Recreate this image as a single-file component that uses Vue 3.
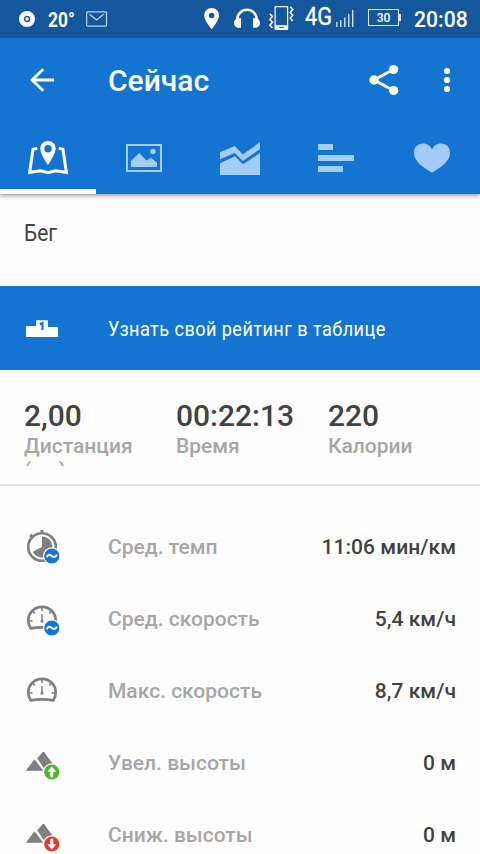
<script setup>
const totals = [
  { value: '2,00', label: 'Дистанция (км)' },
  { value: '00:22:13', label: 'Время' },
  { value: '220', label: 'Калории' },
]
const rows = [
  { icon: 'pace', badge: 'average', label: 'Сред. темп', value: '11:06 мин/км' },
  { icon: 'speed', badge: 'average', label: 'Сред. скорость', value: '5,4 км/ч' },
  { icon: 'speed', badge: '', label: 'Макс. скорость', value: '8,7 км/ч' },
  { icon: 'hill', badge: 'up', label: 'Увел. высоты', value: '0 м' },
  { icon: 'hill', badge: 'down', label: 'Сниж. высоты', value: '0 м' },
]
</script>

<template>
  <div class="screen">
    <header class="top">
      <div class="status">
        <svg class="disc" width="18" height="18" viewBox="0 0 18 18"><circle cx="9" cy="9" r="5.6" fill="none" stroke="#fff" stroke-width="4.800" /><circle cx="9" cy="9" r="1.700" fill="#fff" /></svg>
        <span class="temp"><span class="squeeze">20°</span></span>
        <svg class="mail" width="22" height="16" viewBox="0 0 22 16" fill="none" stroke="#b9d4ee" stroke-width="1.2"><rect x=".7" y=".8" width="19.8" height="14.4" rx="1" /><path d="M3.5 3.2 10.6 9l7.1-5.8" /></svg>
        <svg class="pin" width="16" height="22" viewBox="0 0 16 22"><path fill="#fff" fill-rule="evenodd" d="M7.7 0C3.4 0 .3 3.3.3 7.4.3 12.8 7.7 21 7.7 21s7.3-8.2 7.3-13.6C15 3.3 11.9 0 7.7 0Zm0 4.7a2.8 2.8 0 1 1 0 5.6 2.8 2.8 0 0 1 0-5.6Z" /></svg>
        <svg class="phones" width="26" height="20" viewBox="0 0 26 20"><path d="M3.3 13.5v-2a9.7 9.7 0 0 1 19.4 0v2" fill="none" stroke="#fff" stroke-width="2.6" /><path fill="#fff" d="M7 10.3v9.4H4.2C1.6 19.7 0 17.6 0 15c0-2.5 1.5-4.7 4.2-4.7ZM19 10.3v9.4h2.8c2.6 0 4.2-2.1 4.2-4.7 0-2.5-1.5-4.7-4.2-4.7Z" /></svg>
        <svg class="vibrate" width="26" height="25" viewBox="0 0 26 25"><path fill="#fff" fill-rule="evenodd" d="M6.9 0h10.900c1 0 1.400.5 1.400 1.300v21.400c0 .9-.4 1.300-1.400 1.300H6.900c-1 0-1.400-.4-1.400-1.300V1.300C5.500.5 5.900 0 6.900 0Zm-.2 1.300V19.300H18V1.300ZM10 21v1.100h4.700V21Z" /><path d="m21.200.8 2.500 2.800-2.500 2.800 2.500 2.900-2.500 2.800 2.500 2.900M.9 7.800l2.500 2.800L.9 13.500l2.500 2.800-2.500 2.900 2.500 2.800" fill="none" stroke="#fff" stroke-width="1.500" /></svg>
        <span class="network"><span class="squeeze">4G</span></span>
        <svg class="signal" width="18" height="18" viewBox="0 0 18 18"><path d="M.8 12v5M4.800 10v7M8.800 7.500v9.500M12.800 4v13M16.700 0v17" stroke="#dceafa" stroke-width="1.300" /></svg>
        <span class="battery"><span>30</span></span>
        <span class="clock">20:08</span>
      </div>
      <div class="bar">
        <svg class="back" width="24" height="24" viewBox="0 0 24 24" fill="none" stroke="#fff" stroke-width="2.800"><path d="M24 12H2M13.300 1.200 2 12l11.300 10.800" /></svg>
        <h1>Сейчас</h1>
        <svg class="share" width="30" height="32" viewBox="0 0 30 32"><path d="M24.500 5.500 5 16l19.500 10.500" fill="none" stroke="#fff" stroke-width="3" /><g fill="#fff"><circle cx="24.600" cy="5.500" r="4.600" /><circle cx="5" cy="16" r="4.700" /><circle cx="24.600" cy="26.500" r="4.600" /></g></svg>
        <svg class="more" width="8" height="26" viewBox="0 0 8 26" fill="#fff"><circle cx="4" cy="4" r="3.100" /><circle cx="4" cy="13" r="3.100" /><circle cx="4" cy="22" r="3.100" /></svg>
      </div>
      <nav class="tabs">
        <a class="tab active"><svg width="42" height="36" viewBox="0 0 42 36"><path d="m10.300 8.400-4.300.9L2.700 32.400l10.600-1.700 7.700 2 7.700-2 10.600 1.700L36 9.300l-4.300-.9" fill="none" stroke="#fff" stroke-width="3" /><path fill="#fff" fill-rule="evenodd" d="M21 1c-4.500 0-7.700 3.300-7.700 7.500C13.300 14 21 25 21 25s7.700-11 7.700-16.500C28.700 4.300 25.500 1 21 1Zm0 4a3.700 3.700 0 1 1 0 7.400A3.700 3.700 0 0 1 21 5Z" /></svg></a>
        <a class="tab"><svg width="36" height="28" viewBox="0 0 36 28" fill="#a3cdf7"><path fill-rule="evenodd" d="M0 0h36v28H0ZM2 2v24h32V2Z" /><path d="M5 23v-6l8.200-8 7.300 7.500L25 13.800l6 5V23Z" /><circle cx="27" cy="7.500" r="2.700" /></svg></a>
        <a class="tab"><svg width="40" height="36" viewBox="0 0 40 36" fill="#a3cdf7"><path d="M0 12.300 14.800 6l8 8.500L40 2.300V9L22.800 21l-8-8L0 19.300Z" /><path d="m0 23.300 15-7 8 8L40 13v22H0Z" /></svg></a>
        <a class="tab"><svg width="36" height="28" viewBox="0 0 36 28" fill="#a3cdf7"><path d="M0 0h15v6H0ZM0 11h36v6H0ZM0 22h25v6H0Z" /></svg></a>
        <a class="tab"><svg width="36" height="30" viewBox="0 0 36 30"><path fill="#a3cdf7" d="M18 29.700C13.500 26.500 0 20 0 9.700 0 4 4 .5 9 .5c4 0 7.600 2.500 9 6.200C19.400 3 23 .5 27 .5c5 0 9 3.500 9 9.200 0 10.300-13.500 16.800-18 20Z" /></svg></a>
      </nav>
    </header>

    <div class="activity"><span class="squeeze">Бег</span></div>

    <a class="ranking">
      <svg class="podium" width="32" height="18" viewBox="0 0 32 18"><path fill="#fff" d="M1 6h9V1.200q0-1 1-1h10q1 0 1 1V7h9q1 0 1 1v9H0V7q0-1 1-1Z" /><path d="m13.800 4.100 2.700-1v7" fill="none" stroke="#1474d2" stroke-width="2.200" /></svg>
      <span class="squeeze">Узнать свой рейтинг в таблице</span>
    </a>

    <section class="totals">
      <div v-for="t in totals" :key="t.label" class="total">
        <div class="amount">{{ t.value }}</div>
        <div class="caption">{{ t.label }}</div>
      </div>
    </section>

    <section class="details">
      <div v-for="r in rows" :key="r.label" class="row">
        <svg class="glyph" width="36" height="38" viewBox="0 0 36 38">
          <g v-if="r.icon === 'pace'">
            <circle cx="18" cy="19" r="13.800" fill="none" stroke="#808080" stroke-width="2.600" />
            <path d="M16.500 2h3v4h-3zM5 8l2.500-2.500L9.500 8 7.500 10z" fill="#808080" />
            <path d="M18 19V8.500a10.500 10.500 0 1 1-9.300 15.300Z" fill="#808080" />
          </g>
          <g v-else-if="r.icon === 'speed'" fill="none" stroke="#808080">
            <path d="M6.600 28.300C4.700 25.500 4.300 22.500 4.300 20.500a13.700 13.700 0 0 1 27.400 0c0 2-.4 5-2.300 7.800q-11.400-1.800-22.800 0Z" stroke-width="2.700" />
            <path d="M18 7v4M8.500 11l2.300 2.300M27.500 11l-2.300 2.300M5 21h3.500M31 21h-3.500" stroke-width="1.700" />
            <path d="M18 14v6.500" stroke-width="1.500" /><ellipse cx="18" cy="21" rx="1" ry="1.500" fill="#808080" stroke-width="1" />
          </g>
          <g v-else fill="#808080"><path d="m13.200 14.300 5.400-6.100q.8-.9 1.600 0L30 21.500 25 27h-3.300Z" /><path d="M1.700 26.800 9.500 16.400q1-1.100 2 0L19.300 26.800Z" /></g>
          <g v-if="r.badge">
            <circle cx="27.800" cy="28" r="8.700" fill="#fefefe" />
            <circle cx="27.800" cy="28" r="7.600" :class="r.badge" />
            <path v-if="r.badge === 'average'" d="M22.700 29.200c1.800-3.500 3.600-2.800 5.200-1.300 1.700 1.500 3.400 1.600 5-1.200" fill="none" stroke="#fff" stroke-width="2" />
            <path v-else-if="r.badge === 'up'" d="m27.800 22.500 4.500 5.300h-3v5.400h-3v-5.400h-3Z" fill="#fff" />
            <path v-else d="m27.800 33.500 4.500-5.300h-3v-5.400h-3v5.400h-3Z" fill="#fff" />
          </g>
        </svg>
        <span class="name">{{ r.label }}</span>
        <span class="value">{{ r.value }}</span>
      </div>
    </section>
  </div>
</template>

<style>
body { background: #fefefe; overflow: hidden; }
</style>

<style scoped>
.screen { width: 480px; height: 854px; overflow: hidden; background: #fefefe; font-family: Roboto, "Liberation Sans", sans-serif; color: #424242; }
svg { display: block; flex: none; }
.top { background: #1474d2; color: #fff; box-shadow: 0 1px 5px rgba(0, 0, 0, .5); }
.status { height: 38px; background: #15579c; display: flex; align-items: flex-start; white-space: nowrap; }
.squeeze { display: inline-block; transform-origin: left center; }
.disc { margin: 10px 0 0 18px; }
.temp { width: 38px; margin-left: 12px; font-size: 20px; font-weight: 700; line-height: 40px; }
.temp .squeeze { transform: scaleX(.87); }
.mail { margin-top: 11px; }
.pin { margin: 8px 0 0 96px; }
.phones { margin: 8px 0 0 14px; }
.vibrate { margin: 6px 0 0 9px; }
.network { width: 31px; margin-left: 10px; font-size: 26.5px; line-height: 31px; }
.network .squeeze { transform: scaleX(.82); -webkit-text-stroke: .3px #fff; }
.signal { margin: 10px 0 0 0; }
.battery { box-sizing: border-box; position: relative; width: 31px; height: 17px; margin: 9px 0 0 14px; border: 1.5px solid #dceafa; font-size: 12px; font-weight: 500; line-height: 16px; text-align: center; }
.battery::after { content: ""; position: absolute; right: -3px; top: 4px; width: 2px; height: 7px; background: #dceafa; }
.clock { margin-left: 15px; font-size: 21.2px; font-weight: 500; line-height: 40px; }
.bar { height: 84px; display: flex; align-items: center; }
.back { margin-left: 30px; }
h1 { margin: 2px 0 0 54px; width: 261px; font-size: 30px; font-weight: 500; line-height: 38px; }
.more { margin-left: 44px; }
.tabs { display: grid; grid-template-columns: repeat(5, 96px); height: 72px; }
.tab { display: flex; align-items: center; justify-content: center; box-sizing: border-box; }
.tab.active { border-bottom: 5px solid #fff; padding-top: 5px; }
.activity { height: 92px; box-sizing: border-box; padding: 24px 24px 0; font-size: 24px; line-height: 30px; }
.activity .squeeze { transform: scaleX(.87); }
.ranking { display: flex; align-items: center; height: 84px; padding-left: 26px; background: #1474d2; color: #fff; font-size: 21px; white-space: nowrap; }
.podium { margin-top: 2px; }
.ranking > .squeeze { margin: 2px 0 0 50px; letter-spacing: .5px; transform: scaleX(.863); }
.totals { height: 114px; box-sizing: content-box; border-bottom: 2px solid #dfdfdf; display: grid; grid-template-columns: 152px 152px 128px; padding-left: 24px; }
.total { height: 96px; box-sizing: border-box; padding-top: 29px; overflow: hidden; }
.amount { font-size: 30px; font-weight: 500; line-height: 34px; white-space: nowrap; }
.caption { width: 128px; margin-top: 1px; color: #a6a6a6; font-size: 21px; font-weight: 500; line-height: 24px; }
.details { padding-top: 25px; }
.row { height: 72px; display: flex; align-items: center; padding: 0 24px; font-size: 21px; font-weight: 500; white-space: nowrap; }
.name { margin-left: 48px; color: #a6a6a6; }
.value { margin-left: auto; letter-spacing: .05px; }
.average { fill: #1474d2; }
.up { fill: #4fb52f; }
.down { fill: #df3b31; }
</style>
